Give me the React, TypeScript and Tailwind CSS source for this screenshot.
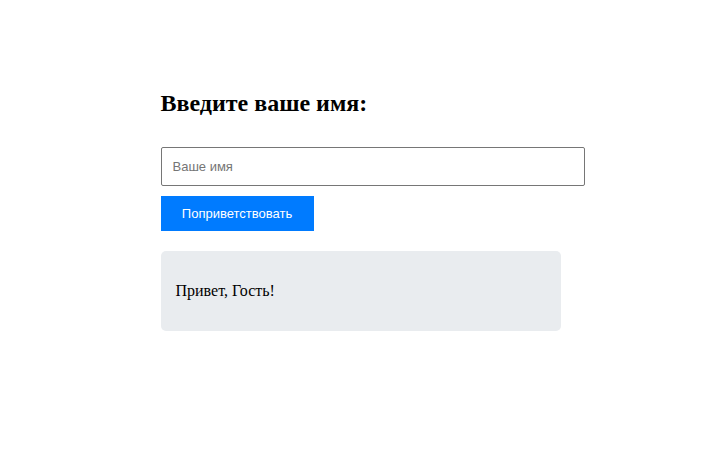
import React, { useState } from 'react';

const GreetingForm: React.FC = () => {
  const [name, setName] = useState('');
  const [greeting, setGreeting] = useState('Привет, Гость!');

  const handleSubmit = (e: React.FormEvent) => {
    e.preventDefault();
    setGreeting(`Привет, ${name.trim() || 'Гость'}!`);
  };

  return (
    <form onSubmit={handleSubmit}>
      <h2 className="mb-[30px] text-2xl leading-[27px] font-bold">
        <label htmlFor="name">Введите ваше имя:</label>
      </h2>
      {/* the field runs a little wider than the column */}
      <div className="-mr-6 mb-2.5">
        <input
          id="name"
          type="text"
          placeholder="Ваше имя"
          value={name}
          onChange={e => setName(e.target.value)}
          className="block w-full rounded-xs border border-[#767676] bg-white px-[11px] py-2.5 font-['Liberation_Sans',Arial,sans-serif] text-[13px] leading-[17px] placeholder:text-[#757575]"
        />
      </div>
      <button
        type="submit"
        className="block min-w-[153px] bg-[#007bff] px-5 py-2.5 font-['Liberation_Sans',Arial,sans-serif] text-[13px] leading-[15px] text-white"
      >
        Поприветствовать
      </button>
      <div className="mt-5 rounded-[5px] bg-[#e9ecef] p-[15px]">
        <p className="my-4 text-base leading-[18px]">{greeting}</p>
      </div>
    </form>
  );
};

export default function App() {
  return (
    <main className="mx-auto mt-[50px] max-w-[440px] p-5 pt-10 font-['Liberation_Serif','Times_New_Roman',serif] text-black">
      <GreetingForm />
    </main>
  );
}
